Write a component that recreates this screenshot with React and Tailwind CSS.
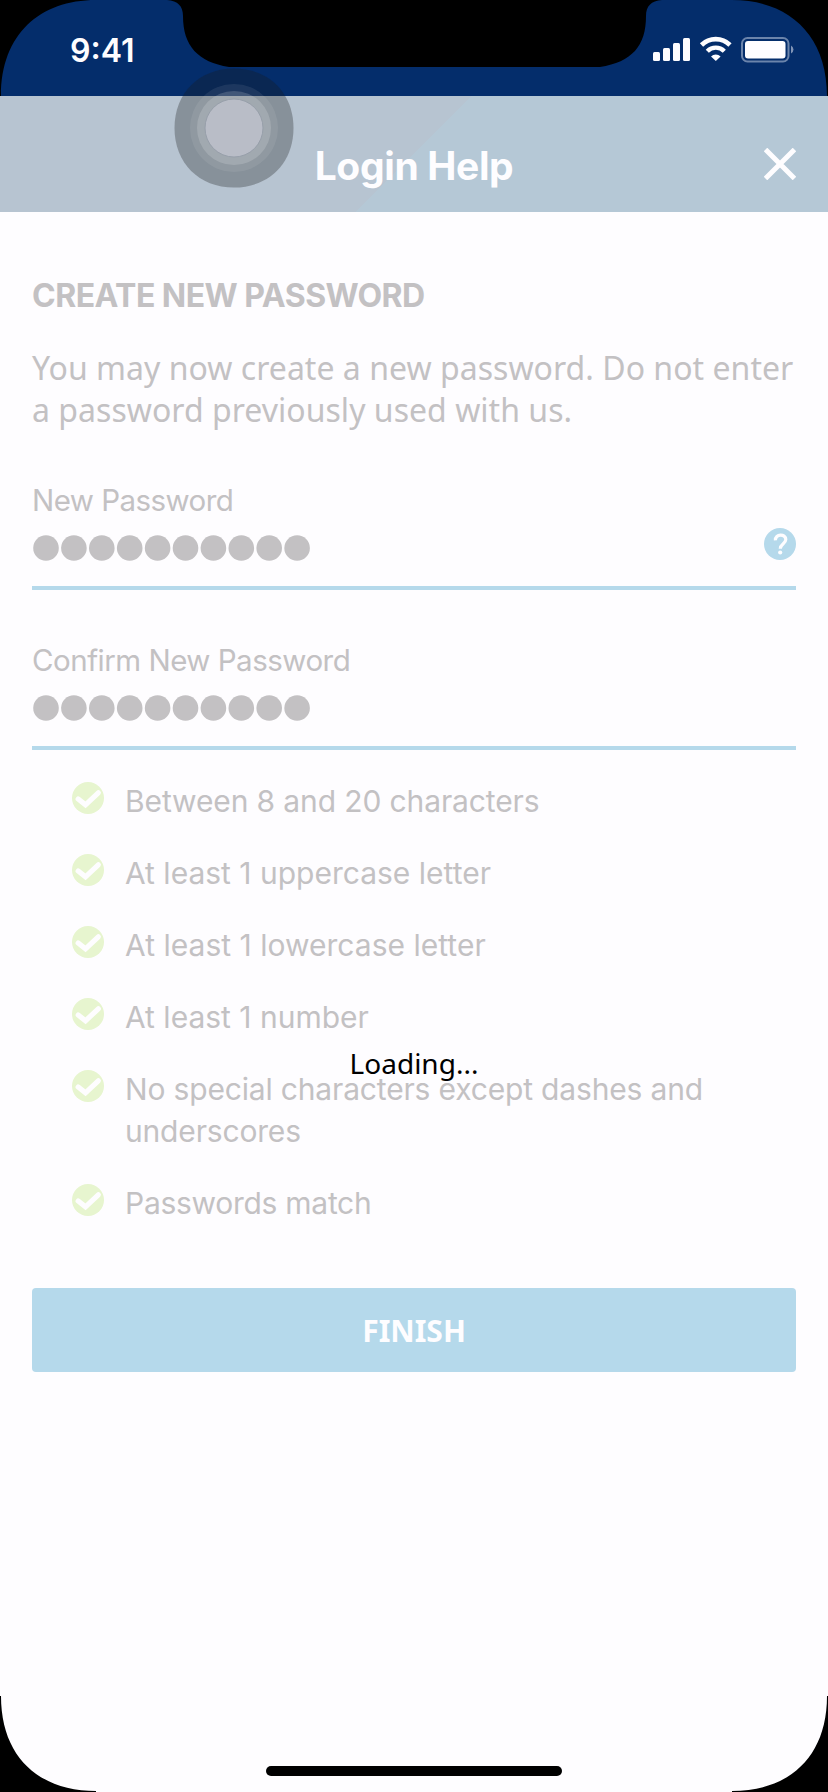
function CheckIcon() {
  return (
    <svg className="block size-8 shrink-0" viewBox="0 0 32 32">
      <circle cx="16" cy="16" r="16" fill="#e7f5cf" />
      <path d="M6.200 17 13.500 22.800 26.300 10.800" fill="none" stroke="#fefdff" strokeWidth="5.200" strokeLinecap="round" strokeLinejoin="miter" />
    </svg>
  );
}

function Dots() {
  return (
    <svg className="block h-[26px] w-[280px]" viewBox="0 0 280 26" fill="#c3c1c3">
      {[0, 1, 2, 3, 4, 5, 6, 7, 8, 9].map((i) => (
        <circle key={i} cx={14 + i * 27.9} cy="13" r="12.8" />
      ))}
    </svg>
  );
}

const RULES = [
  { text: 'Between 8 and 20 characters', cls: 'tracking-[-0.12px]' },
  { text: 'At least 1 uppercase letter', cls: 'tracking-[0px]' },
  { text: 'At least 1 lowercase letter', cls: 'tracking-[0.02px]' },
  { text: 'At least 1 number', cls: 'tracking-[0px]' },
  { text: 'No special characters except dashes and underscores', cls: 'tracking-[-0.17px]' },
  { text: 'Passwords match', cls: 'tracking-[-0.28px]' },
];

export default function App() {
  return (
    <div className="relative flex h-[1792px] w-[828px] flex-col overflow-hidden bg-[#fefdff] font-['Inter',sans-serif] text-[#c3c1c3]">
      <div className="flex h-24 shrink-0 items-start justify-between bg-[#042d6b] pr-[34px] pl-[70px] text-[#fefdff]">
        <div className="mt-[31px] text-[32px] leading-[40px] font-semibold"><span>9:41</span></div>
        <svg className="mt-[34px] block h-[32px] w-[142px]" viewBox="652 34 142 32" fill="#fefdff">
          <rect x="653" y="52" width="7" height="9" rx="1.5" />
          <rect x="663" y="48" width="7" height="13" rx="1.5" />
          <rect x="673" y="43" width="7" height="18" rx="1.5" />
          <rect x="683" y="38" width="7" height="23" rx="1.5" />
          <path d="M701.500 45a20.300 20.300 0 0 1 28.500 0" fill="none" stroke="#fefdff" strokeWidth="4.600" />
          <path d="M707.300 51.200a12 12 0 0 1 17 0" fill="none" stroke="#fefdff" strokeWidth="4.400" />
          <path d="M715.800 61 711 56.500a7 7 0 0 1 9.600 0Z" />
          <rect x="742" y="38" width="46.500" height="23.500" rx="5.500" fill="none" stroke="#6b84ab" strokeWidth="2" />
          <rect x="745" y="41" width="40.500" height="17.500" rx="3" />
          <path d="M791 45.500a4.500 4.500 0 0 1 0 8Z" fill="#8195b7" />
        </svg>
      </div>

      <header className="flex h-[116px] shrink-0 items-center bg-[linear-gradient(135deg,#b7c4d1_0%,#b7c4d1_50%,#b5c8d6_50%)] pt-5 pr-8 pl-16">
        <h1 className="mt-[3px] flex-1 text-center text-[39px] leading-[48px] font-bold tracking-[-0.35px] text-[#fefdff]"><span>Login Help</span></h1>
        <svg className="block size-8" viewBox="0 0 32 32" stroke="#fefdff" strokeWidth="5">
          <path d="M1.500 1.500 30.500 30.500M30.500 1.500 1.500 30.500" />
        </svg>
      </header>

      <main className="flex flex-col px-8 pt-16">
        <h2 className="h-[38px] text-[32px] leading-[40px] font-bold tracking-[-0.53px]"><span>CREATE NEW PASSWORD</span></h2>
        <p className="mt-[33px] font-['Noto_Sans',sans-serif] text-[32px] leading-[42px] tracking-[0.03px] whitespace-nowrap">
          <span>You may now create a new password. Do not enter</span>
          <br />
          <span>a password previously used with us.</span>
        </p>
        <div className="mt-[46px] flex h-[113px] flex-col border-b-4 border-[#b5d9eb]">
          <label className="h-[49px] text-[29.5px] leading-[46px] tracking-[-0.55px]"><span>New Password</span></label>
          <div className="flex items-start justify-between">
            <div className="mt-[9px]"><Dots /></div>
            <svg className="mt-[2px] block size-8" viewBox="0 0 32 32">
              <circle cx="16" cy="16" r="16" fill="#b5d9eb" />
              <path d="M11.400 12.400C11 5.500 21.800 5.400 21.800 11.600 21.800 15.800 16.300 15.800 16.300 20.800" fill="none" stroke="#fefdff" strokeWidth="3.200" />
              <circle cx="16.200" cy="24.500" r="2.100" fill="#fefdff" />
            </svg>
          </div>
        </div>
        <div className="mt-[47px] flex h-[113px] flex-col border-b-4 border-[#b5d9eb]">
          <label className="h-[49px] text-[29.5px] leading-[46px] tracking-[-0.5px]"><span>Confirm New Password</span></label>
          <div className="mt-[9px]"><Dots /></div>
        </div>
        <ul className="mt-8 flex flex-col gap-[30px] pl-10">
          {RULES.map((r) => (
            <li key={r.text} className="flex gap-[21px]">
              <CheckIcon />
              <span className={'-mt-[2px] mb-[2px] block max-w-[600px] text-[30px] leading-[42px] ' + r.cls}><span>{r.text}</span></span>
            </li>
          ))}
        </ul>
        <button className="mt-[62px] h-[84px] rounded bg-[#b5d9eb] font-['Noto_Sans',sans-serif] text-[30px] font-bold text-[#fefdff]"><span>FINISH</span></button>
      </main>

      <div className="absolute top-[1043px] left-0 w-full text-center font-['Noto_Sans',sans-serif] text-[28px] leading-[40px] text-black">
        <span>Loading...</span>
      </div>

      <svg className="absolute top-0 left-0 block" width="828" height="1792" viewBox="0 0 828 1792">
        <path d="M0 0H96C40 0 1 34 1 96H0ZM828 0H732C788 0 827 34 827 96H828ZM0 1696H1C1 1758 40 1791 96 1791V1792H0ZM828 1696H827C827 1758 788 1791 732 1791V1792H828Z" />
        <path d="M167 0C178 1 183 6 183 16C183 46 198 62 229 67H600C632 62 646 46 646 16C646 6 651 1 662 0Z" />
        <rect x="266" y="1766" width="296" height="10" rx="5" />
        <path d="M234 68.500C269 68.500 293.500 93 293.500 128S269 187.500 234 187.500 174.500 163 174.500 128 199 68.500 234 68.500Z" fill="#1c1c1c" fillOpacity=".3" />
        <circle cx="234" cy="128" r="44" fill="#fff" fillOpacity=".08" />
        <circle cx="234" cy="128" r="37" fill="#fff" fillOpacity=".16" />
        <circle cx="234" cy="128" r="29" fill="#b9bdc7" stroke="#979faa" />
      </svg>
    </div>
  );
}
